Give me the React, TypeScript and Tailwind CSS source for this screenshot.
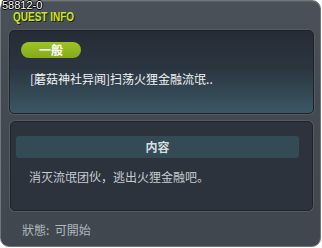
import React from "react";

export default function App() {
  return (
    <div className="relative w-[322px] h-[248px] bg-white">
      <div className="flex flex-col w-[321px] h-[247px] rounded-[9px] border border-[#70767e] bg-[linear-gradient(to_bottom,#4a5159,#434a52_40%,#40474f)] pt-[10px] pl-[8px] shadow-[inset_0_1px_0_#5a6169]">
        <div className="h-[10px] pl-[4px] font-['Liberation_Sans',sans-serif] text-[10px] font-bold leading-[10px] text-[#cce41e] [text-shadow:1px_1px_0_#1a1f10] origin-top-left scale-y-[1.2]">
          QUEST INFO
        </div>
        <div className="mt-[9px] flex flex-col w-[305px] h-[84px] rounded-[5px] border border-[#1f242b] bg-[linear-gradient(to_bottom,#262c36,#2b3540_45%,#3a5864)] pt-[11px] pl-[11px] shadow-[0_0_0_1px_#535a62]">
          <div className="flex items-center justify-center w-[60px] h-[16px] rounded-full bg-[linear-gradient(to_bottom,#9cc424,#86aa1c)] font-['Noto_Sans_CJK_SC',sans-serif] text-[12px] font-bold leading-none text-white">
            一般
          </div>
          <div className="mt-[13px] pl-[9px] font-['Noto_Sans_CJK_SC',sans-serif] text-[12px] leading-[16px] text-[#f0f2f4]">
            [蘑菇神社异闻]扫荡火狸金融流氓..
          </div>
        </div>
        <div className="mt-[7px] ml-[1px] flex flex-col w-[303px] h-[90px] rounded-[5px] border border-[#1f242b] bg-[#2d333d] pt-[14px] pl-[5px] shadow-[0_0_0_1px_#535a62]">
          <div className="flex items-center justify-center w-[283px] h-[22px] rounded-[3px] bg-[#344b56] font-['Noto_Sans_CJK_SC',sans-serif] text-[12px] font-bold text-[#d6dde0]">
            内容
          </div>
          <div className="mt-[11px] pl-[13px] font-['Noto_Sans_CJK_SC',sans-serif] text-[12px] leading-[16px] text-[#c4ccd0]">
            消灭流氓团伙，逃出火狸金融吧。
          </div>
        </div>
        <div className="mt-[11px] pl-[13px] font-['Noto_Sans_CJK_SC',sans-serif] text-[12px] leading-[16px] text-[#b0b8bd]">
          狀態:&nbsp;&nbsp;可開始
        </div>
      </div>
      <div className="absolute left-[2px] top-[0px] font-['Liberation_Sans',sans-serif] text-[11px] leading-[11px] text-white [text-shadow:1px_0_0_#000,-1px_0_0_#000,0_1px_0_#000,0_-1px_0_#000]">
        58812-0
      </div>
    </div>
  );
}
